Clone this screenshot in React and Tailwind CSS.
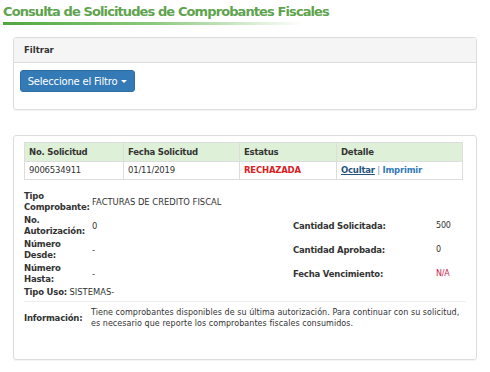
import React from "react";

const rows = [
  { label: ["Tipo", "Comprobante:"], value: "FACTURAS DE CREDITO FISCAL" },
  { label: ["No.", "Autorización:"], value: "0", rLabel: "Cantidad Solicitada:", rValue: "500" },
  { label: ["Número", "Desde:"], value: "-", rLabel: "Cantidad Aprobada:", rValue: "0" },
  { label: ["Número", "Hasta:"], value: "-", rLabel: "Fecha Vencimiento:", rValue: "N/A", red: true },
];

export default function App() {
  return (
    <div
      className="w-[490px] h-[372px] bg-white text-[#333] overflow-hidden"
      style={{ fontFamily: '"DejaVu Sans", Verdana, sans-serif' }}
    >
      <div className="pl-[3px] pt-[3px]">
        <h1 className="text-[13px] leading-[18px] font-bold text-[#5ea34d] tracking-[-0.9px]">
          Consulta de Solicitudes de Comprobantes Fiscales
        </h1>
        <div className="mt-[1px] h-[3px] w-[300px] bg-gradient-to-r from-[#4fa63f] via-[#8cc97e] to-transparent" />
      </div>

      {/* filtro */}
      <div className="mx-[13px] mt-[12px] border border-[#dddddd] rounded-[3px] shadow-[0_1px_1px_rgba(0,0,0,0.05)]">
        <div className="h-[25px] bg-[#f5f5f5] border-b border-[#dddddd] pl-[10px] flex items-center text-[8.5px] font-bold text-[#333]">
          Filtrar
        </div>
        <div className="px-[6px] pt-[7px] pb-[17px]">
          <button className="h-[22px] w-[115px] rounded-[3px] bg-[#337ab7] border border-[#2e6da4] text-white text-[10px] tracking-[-0.2px] flex items-center justify-center gap-[4px]">
            Seleccione el Filtro
            <span className="inline-block w-0 h-0 border-l-[3px] border-r-[3px] border-t-[3px] border-l-transparent border-r-transparent border-t-white" />
          </button>
        </div>
      </div>

      {/* resultados */}
      <div className="mx-[13px] mt-[25px] h-[225px] border border-[#dddddd] rounded-[3px] shadow-[0_1px_1px_rgba(0,0,0,0.05)] px-[10px] pt-[6px]">
        <table className="w-[439px] border-collapse text-[8.5px] tracking-[-0.2px]">
          <thead>
            <tr className="bg-[#dff0d8] h-[19px]">
              <th className="w-[99px] text-left font-bold border border-[#dddddd] pl-[4px]">No. Solicitud</th>
              <th className="w-[116px] text-left font-bold border border-[#dddddd] pl-[4px]">Fecha Solicitud</th>
              <th className="w-[97px] text-left font-bold border border-[#dddddd] pl-[4px]">Estatus</th>
              <th className="text-left font-bold border border-[#dddddd] pl-[4px]">Detalle</th>
            </tr>
          </thead>
          <tbody>
            <tr className="h-[18px]">
              <td className="border border-[#dddddd] pl-[4px]">9006534911</td>
              <td className="border border-[#dddddd] pl-[4px]">01/11/2019</td>
              <td className="border border-[#dddddd] pl-[4px] font-bold text-[#d9201f]">RECHAZADA</td>
              <td className="border border-[#dddddd] pl-[4px]">
                <span className="underline text-[#23527c] font-bold">Ocultar</span>
                <span className="text-[#6f93b8]"> | </span>
                <span className="text-[#337ab7] font-bold">Imprimir</span>
              </td>
            </tr>
          </tbody>
        </table>

        <div className="mt-[10px] grid grid-cols-[68px_201px_143px_27px] text-[8.5px] tracking-[-0.2px]">
          {rows.map((r, i) => (
            <React.Fragment key={i}>
              <div className="h-[24px] font-bold leading-[11px] flex flex-col justify-center">
                <span>{r.label[0]}</span>
                <span>{r.label[1]}</span>
              </div>
              <div className="h-[24px] flex items-center text-[8.4px] tracking-[0px]">{r.value}</div>
              <div className="h-[24px] flex items-center font-bold">{r.rLabel}</div>
              <div className={"h-[24px] flex items-center text-[8px] " + (r.red ? "text-[#c7254e]" : "")}>{r.rValue}</div>
            </React.Fragment>
          ))}
        </div>
        <div className="text-[8.5px] tracking-[-0.2px] leading-[12px]">
          <span className="font-bold">Tipo Uso:</span> <span className="text-[8.4px] tracking-[0px]">SISTEMAS-</span>
        </div>

        <div className="mt-[3px] border-t border-[#eeeeee] pt-[5px] flex items-center text-[8px]">
          <div className="w-[67px] shrink-0 font-bold text-[8.5px] tracking-[-0.2px]">Información:</div>
          <div className="leading-[11px] tracking-[0.05px]">
            Tiene comprobantes disponibles de su última autorización. Para continuar con su solicitud, es necesario que reporte los comprobantes fiscales consumidos.
          </div>
        </div>
      </div>
    </div>
  );
}
